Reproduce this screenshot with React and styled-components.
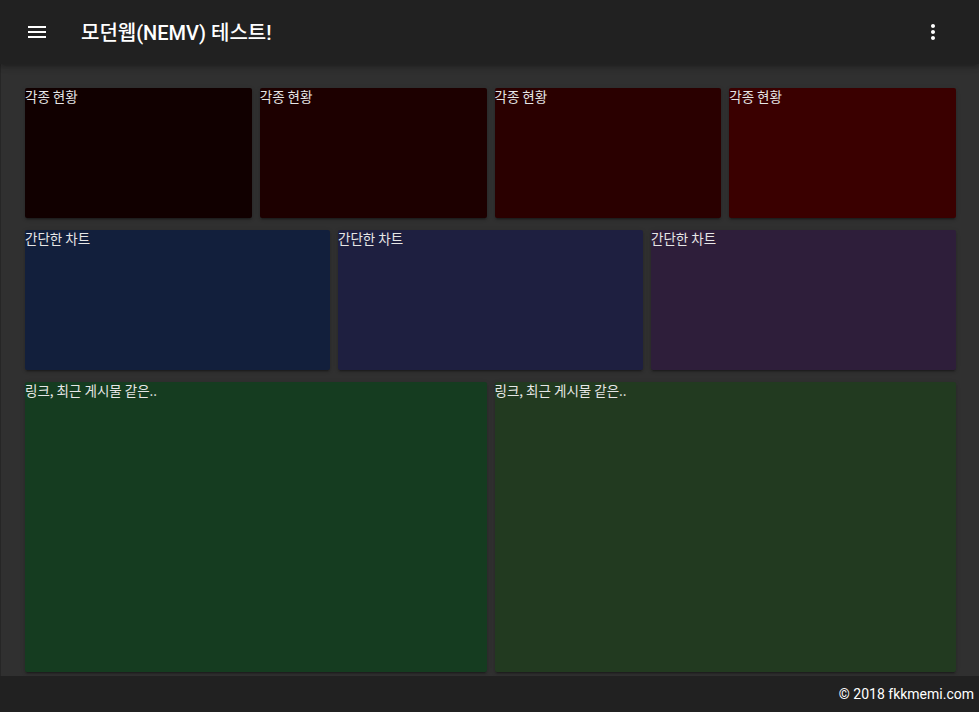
import React from "react";
import styled, { createGlobalStyle } from "styled-components";

const Global = createGlobalStyle`
  html, body { margin: 0; padding: 0; background: #303030; }
  body { font-family: Roboto, "Noto Sans CJK KR", sans-serif; color: #fff; }
`;

const Page = styled.div`
  width: 979px;
  height: 712px;
  display: flex;
  flex-direction: column;
  background: #303030;
  overflow: hidden;
`;

const Toolbar = styled.header`
  height: 64px;
  flex: none;
  display: flex;
  align-items: center;
  padding: 0 34px 0 25px;
  background: #212121;
  box-shadow: 0 2px 4px -1px rgba(0,0,0,.2), 0 4px 5px 0 rgba(0,0,0,.14), 0 1px 10px 0 rgba(0,0,0,.12);
  position: relative;
  z-index: 2;
`;

const IconBtn = styled.button`
  background: none;
  border: 0;
  padding: 0;
  width: 24px;
  height: 24px;
  display: flex;
  align-items: center;
  justify-content: center;
  color: #fff;
`;

const Title = styled.div`
  margin-left: 32px;
  margin-top: -2px;
  font-family: Roboto, "Noto Sans CJK KR", sans-serif;
  font-size: 20px;
  font-weight: 500;
  flex: 1;
`;

const Main = styled.main`
  flex: 1;
  display: flex;
  flex-direction: column;
  gap: 12px;
  padding: 24px 23px 0 24px;
  border-left: 1px solid #262626;
`;

const Row = styled.div`
  display: grid;
  grid-template-columns: repeat(${(p) => p.$cols}, 1fr);
  column-gap: 8px;
  height: ${(p) => p.$h}px;
  flex: none;
`;

const Card = styled.div`
  background: ${(p) => p.$bg};
  border-radius: 2px;
  box-shadow: 0 3px 1px -2px rgba(0,0,0,.2), 0 2px 2px 0 rgba(0,0,0,.14), 0 1px 5px 0 rgba(0,0,0,.12);
  font-family: "Noto Sans CJK KR", sans-serif;
  font-size: 13.5px;
  line-height: 17px;
  color: #e6e6e6;
`;

const Footer = styled.footer`
  height: 36px;
  flex: none;
  background: #212121;
  display: flex;
  align-items: center;
  justify-content: flex-end;
  padding-right: 5px;
  font-size: 14px;
  color: #fff;
`;

const Menu = () => (
  <svg width="24" height="24" viewBox="0 0 24 24" fill="currentColor">
    <path d="M3 18h18v-2H3v2zm0-5h18v-2H3v2zm0-7v2h18V6H3z" />
  </svg>
);

const Dots = () => (
  <svg width="24" height="24" viewBox="0 0 24 24" fill="currentColor">
    <path d="M12 8c1.1 0 2-.9 2-2s-.9-2-2-2-2 .9-2 2 .9 2 2 2zm0 2c-1.1 0-2 .9-2 2s.9 2 2 2 2-.9 2-2-.9-2-2-2zm0 6c-1.1 0-2 .9-2 2s.9 2 2 2 2-.9 2-2-.9-2-2-2z" />
  </svg>
);

const rows = [
  { h: 130, text: "각종 현황", colors: ["#110000", "#1d0000", "#2a0000", "#3a0000"] },
  { h: 140, text: "간단한 차트", colors: ["#121f3c", "#1e1f40", "#2e1e3a"] },
  { h: 290, text: "링크, 최근 게시물 같은..", colors: ["#153c20", "#223a20"] },
];

export default function App() {
  return (
    <Page>
      <Global />
      <Toolbar>
        <IconBtn><Menu /></IconBtn>
        <Title>모던웹(NEMV) 테스트!</Title>
        <IconBtn><Dots /></IconBtn>
      </Toolbar>
      <Main>
        {rows.map((r, i) => (
          <Row key={i} $cols={r.colors.length} $h={r.h}>
            {r.colors.map((c) => (
              <Card key={c} $bg={c}>{r.text}</Card>
            ))}
          </Row>
        ))}
      </Main>
      <Footer>© 2018 fkkmemi.com</Footer>
    </Page>
  );
}
